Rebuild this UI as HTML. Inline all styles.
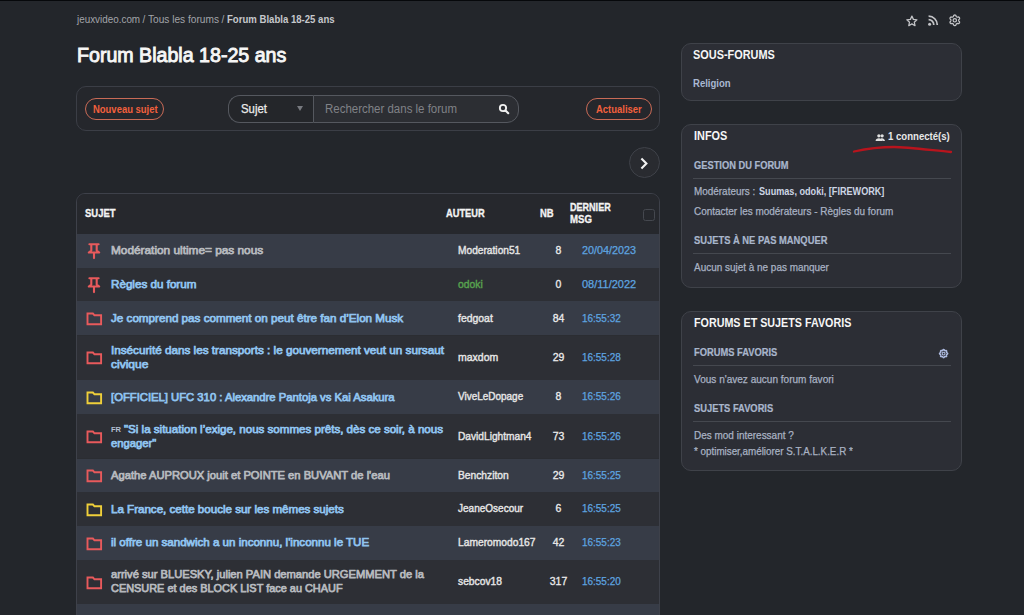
<!DOCTYPE html>
<html><head><meta charset="utf-8">
<style>
*{box-sizing:border-box;margin:0;padding:0}
html,body{width:1024px;height:615px;overflow:hidden;background:#23262b;font-family:"Liberation Sans",sans-serif;color:#e8e8e8}
.abs{position:absolute}
.t{position:absolute;white-space:nowrap;line-height:1}
#topline{left:0;top:0;width:1024px;height:1px;background:#06080b}
#toolbar{left:76px;top:86px;width:584px;height:45px;border:1px solid #3b3e46;border-radius:10px;background:#25272c}
.pill{position:absolute;height:22px;border:1.2px solid #c86a56;border-radius:11px}
#nouveau{left:84.5px;top:97.8px;width:79.5px}
#actualiser{left:586px;top:97.8px;width:65.8px}
#select{left:228px;top:95px;width:85px;height:28px;border:1px solid #55585f;border-right:none;border-radius:12px 0 0 12px;background:#24262a}
#select i{position:absolute;left:68px;top:10px;width:0;height:0;border-left:3.7px solid transparent;border-right:3.7px solid transparent;border-top:5.2px solid #77797f}
#search{left:312.5px;top:95px;width:206px;height:28px;border:1px solid #55585f;border-radius:0 12px 12px 0;background:#2c2e33}
#circle{left:629px;top:146.5px;width:31px;height:31px;border-radius:50%;border:1.3px solid #3f4249;background:#292b30}
#table{left:76px;top:193px;width:584px;height:440px;border:1px solid #3e414a;border-radius:9px;overflow:hidden;background:#2b2d32}
#thead{position:absolute;left:0;top:0;width:582px;height:40px;background:#26282d}
#chk{position:absolute;left:566px;top:15px;width:12px;height:12px;border:1.5px solid #45484f;border-radius:2.5px}
.row{position:absolute;left:0;width:582px}
.row.l{background:#373c47}
.row.d{background:#2d2f35}
.ic{position:absolute}
.card{position:absolute;left:681px;width:281px;border:1px solid #3f4249;border-radius:10px;background:#2c2e35}
.hr{position:absolute;left:693px;width:258px;height:1px;background:#45484f}
</style></head>
<body>
<div id="topline" class="abs"></div>


<div id="toolbar" class="abs"></div>
<div id="nouveau" class="pill"></div>
<div id="select" class="abs"><i></i></div>
<div id="search" class="abs"><svg style="position:absolute;left:184.5px;top:6.8px" width="12" height="12" viewBox="0 0 24 24"><circle cx="10" cy="10" r="6.3" fill="none" stroke="#f0f0f0" stroke-width="3.8"/><path d="M15 15l5.5 5.5" stroke="#f0f0f0" stroke-width="4.2" stroke-linecap="round"/></svg></div>
<div id="actualiser" class="pill"></div>

<div id="circle" class="abs"><svg style="position:absolute;left:9px;top:8px" width="12" height="14" viewBox="0 0 12 14"><path d="M2.4 2.6L7.4 7.6 2.4 12.6" fill="none" stroke="#f2f2f2" stroke-width="2.1"/></svg></div>

<div id="table" class="abs">
 <div id="thead"><div id="chk"></div></div>
<div class="row l" style="top:40.00px;height:33.70px"></div>
<div class="row d" style="top:73.70px;height:33.70px"></div>
<div class="row l" style="top:107.40px;height:34.10px"></div>
<div class="row d" style="top:141.50px;height:44.40px"></div>
<div class="row l" style="top:185.90px;height:34.30px"></div>
<div class="row d" style="top:220.20px;height:44.30px"></div>
<div class="row l" style="top:264.50px;height:33.50px"></div>
<div class="row d" style="top:298.00px;height:34.00px"></div>
<div class="row l" style="top:332.00px;height:33.70px"></div>
<div class="row d" style="top:365.70px;height:44.50px"></div>
<div class="row l" style="top:410.20px;height:40.00px"></div>
</div>

<div class="card" style="top:43px;height:58px"></div>
<div class="card" style="top:124px;height:164px"></div>
<div class="hr" style="top:178px"></div>
<div class="hr" style="top:253px"></div>
<svg class="abs" style="left:874.6px;top:133.6px" width="10.5" height="7" viewBox="0 0 22 15"><circle cx="8" cy="4" r="3.5" fill="#e0e0e0"/><circle cx="15" cy="4" r="3.5" fill="#e0e0e0"/><path d="M1 15c0-4 3-6 7-6s7 2 7 6zM12 9c4 0 9 1 9 6h-5" fill="#e0e0e0"/></svg>
<svg class="abs" style="left:850px;top:142px" width="105" height="14" viewBox="0 0 105 14"><path d="M4 9.5C20 6 32 5 44 5S80 8 101 10" fill="none" stroke="#b8141d" stroke-width="2.3" stroke-linecap="round"/></svg>

<div class="card" style="top:311px;height:160px"></div>

<div class="hr" style="top:365px"></div>
<div class="hr" style="top:421px"></div>

<svg class="ic" style="left:86.8px;top:242.95px" width="14" height="17" viewBox="0 0 14 17"><path d="M2.4 1.3h9.2M4.3 1.3v6.2L1.8 9.5h10.4L9.7 7.5V1.3M7 9.5v5.6" fill="none" stroke="#e85a5c" stroke-width="2.1" stroke-linejoin="round" stroke-linecap="round"/></svg>
<svg class="ic" style="left:86.8px;top:276.65px" width="14" height="17" viewBox="0 0 14 17"><path d="M2.4 1.3h9.2M4.3 1.3v6.2L1.8 9.5h10.4L9.7 7.5V1.3M7 9.5v5.6" fill="none" stroke="#e85a5c" stroke-width="2.1" stroke-linejoin="round" stroke-linecap="round"/></svg>
<svg class="ic" style="left:85.8px;top:312.15px" width="17" height="14" viewBox="0 0 17 14"><path d="M1.5 1.5h5.4l1.6 1.8h6.6v9H1.5z" fill="none" stroke="#e85a5c" stroke-width="1.9" stroke-linejoin="miter"/></svg>
<svg class="ic" style="left:85.8px;top:351.40px" width="17" height="14" viewBox="0 0 17 14"><path d="M1.5 1.5h5.4l1.6 1.8h6.6v9H1.5z" fill="none" stroke="#e85a5c" stroke-width="1.9" stroke-linejoin="miter"/></svg>
<svg class="ic" style="left:85.8px;top:390.75px" width="17" height="14" viewBox="0 0 17 14"><path d="M1.5 1.5h5.4l1.6 1.8h6.6v9H1.5z" fill="none" stroke="#efcf3a" stroke-width="1.9" stroke-linejoin="miter"/></svg>
<svg class="ic" style="left:85.8px;top:430.05px" width="17" height="14" viewBox="0 0 17 14"><path d="M1.5 1.5h5.4l1.6 1.8h6.6v9H1.5z" fill="none" stroke="#e85a5c" stroke-width="1.9" stroke-linejoin="miter"/></svg>
<svg class="ic" style="left:85.8px;top:468.95px" width="17" height="14" viewBox="0 0 17 14"><path d="M1.5 1.5h5.4l1.6 1.8h6.6v9H1.5z" fill="none" stroke="#e85a5c" stroke-width="1.9" stroke-linejoin="miter"/></svg>
<svg class="ic" style="left:85.8px;top:502.70px" width="17" height="14" viewBox="0 0 17 14"><path d="M1.5 1.5h5.4l1.6 1.8h6.6v9H1.5z" fill="none" stroke="#efcf3a" stroke-width="1.9" stroke-linejoin="miter"/></svg>
<svg class="ic" style="left:85.8px;top:536.55px" width="17" height="14" viewBox="0 0 17 14"><path d="M1.5 1.5h5.4l1.6 1.8h6.6v9H1.5z" fill="none" stroke="#e85a5c" stroke-width="1.9" stroke-linejoin="miter"/></svg>
<svg class="ic" style="left:85.8px;top:575.65px" width="17" height="14" viewBox="0 0 17 14"><path d="M1.5 1.5h5.4l1.6 1.8h6.6v9H1.5z" fill="none" stroke="#e85a5c" stroke-width="1.9" stroke-linejoin="miter"/></svg>
<div class="t" style="top:15.00px;font-size:10px;color:#a2a4a9;transform:scaleX(0.9871);transform-origin:0 0;left:76.50px;">jeuxvideo.com</div>
<div class="t" style="top:15.00px;font-size:10px;color:#a2a4a9;left:142.60px;">/</div>
<div class="t" style="top:15.00px;font-size:10px;color:#a2a4a9;transform:scaleX(1.0138);transform-origin:0 0;left:148.40px;">Tous les forums</div>
<div class="t" style="top:15.00px;font-size:10px;color:#a2a4a9;left:221.60px;">/</div>
<div class="t" style="top:15.00px;font-size:10px;font-weight:700;color:#c6c8cc;transform:scaleX(0.9584);transform-origin:0 0;left:226.60px;">Forum Blabla 18-25 ans</div>
<div class="t" style="top:44.60px;font-size:20px;color:#f6f6f6;transform:scaleX(0.9805);transform-origin:0 0;-webkit-text-stroke:0.9px #f6f6f6;left:76.50px;">Forum Blabla 18-25 ans</div>
<div class="t" style="top:104.80px;font-size:10px;font-weight:700;color:#f2603d;transform:scaleX(0.945);transform-origin:0 0;left:92.50px;">Nouveau sujet</div>
<div class="t" style="top:103.20px;font-size:12px;color:#ececec;transform:scaleX(0.9467);transform-origin:0 0;-webkit-text-stroke:0.25px #ececec;left:241.30px;">Sujet</div>
<div class="t" style="top:103.20px;font-size:12px;color:#808287;transform:scaleX(0.956);transform-origin:0 0;left:325.00px;">Rechercher dans le forum</div>
<div class="t" style="top:104.75px;font-size:10px;font-weight:700;color:#f2603d;transform:scaleX(0.9471);transform-origin:0 0;left:596.00px;">Actualiser</div>
<div class="t" style="top:209.10px;font-size:10px;font-weight:700;color:#f4f4f4;transform:scaleX(0.9462);transform-origin:0 0;-webkit-text-stroke:0.3px #f4f4f4;left:84.70px;">SUJET</div>
<div class="t" style="top:209.00px;font-size:10px;font-weight:700;color:#f4f4f4;transform:scaleX(0.9287);transform-origin:0 0;-webkit-text-stroke:0.3px #f4f4f4;left:446.15px;">AUTEUR</div>
<div class="t" style="top:208.90px;font-size:10px;font-weight:700;color:#f4f4f4;transform:scaleX(0.9444);transform-origin:0 0;-webkit-text-stroke:0.3px #f4f4f4;left:539.90px;">NB</div>
<div class="t" style="top:202.90px;font-size:10px;font-weight:700;color:#f4f4f4;transform:scaleX(0.9041);transform-origin:0 0;-webkit-text-stroke:0.3px #f4f4f4;left:569.90px;">DERNIER</div>
<div class="t" style="top:215.00px;font-size:10px;font-weight:700;color:#f4f4f4;transform:scaleX(0.9613);transform-origin:0 0;-webkit-text-stroke:0.3px #f4f4f4;left:569.90px;">MSG</div>
<div class="t" style="top:245.35px;font-size:11.5px;color:#b7babf;transform:scaleX(1.0284);transform-origin:0 0;-webkit-text-stroke:0.75px #b7babf;left:111.00px;">Modération ultime= pas nous</div>
<div class="t" style="top:245.25px;font-size:11px;color:#e6e6e6;transform:scaleX(0.926);transform-origin:0 0;-webkit-text-stroke:0.4px #e6e6e6;left:458.00px;">Moderation51</div>
<div class="t" style="top:245.25px;font-size:10.5px;color:#ececec;-webkit-text-stroke:0.3px #ececec;left:538px;width:41px;text-align:center;">8</div>
<div class="t" style="top:245.25px;font-size:10.5px;color:#5ea5e0;transform:scaleX(1.0293);transform-origin:0 0;-webkit-text-stroke:0.25px #5ea5e0;left:582.00px;">20/04/2023</div>
<div class="t" style="top:279.05px;font-size:11.5px;color:#90c4f0;transform:scaleX(1.0121);transform-origin:0 0;-webkit-text-stroke:0.75px #90c4f0;left:111.00px;">Règles du forum</div>
<div class="t" style="top:278.95px;font-size:11px;color:#58a34f;transform:scaleX(0.9431);transform-origin:0 0;-webkit-text-stroke:0.4px #58a34f;left:458.00px;">odoki</div>
<div class="t" style="top:278.95px;font-size:10.5px;color:#ececec;-webkit-text-stroke:0.3px #ececec;left:538px;width:41px;text-align:center;">0</div>
<div class="t" style="top:278.95px;font-size:10.5px;color:#5ea5e0;transform:scaleX(1.0448);transform-origin:0 0;-webkit-text-stroke:0.25px #5ea5e0;left:582.00px;">08/11/2022</div>
<div class="t" style="top:312.95px;font-size:11.5px;color:#90c4f0;transform:scaleX(1.0135);transform-origin:0 0;-webkit-text-stroke:0.75px #90c4f0;left:111.00px;">Je comprend pas comment on peut être fan d’Elon Musk</div>
<div class="t" style="top:312.85px;font-size:11px;color:#e6e6e6;transform:scaleX(0.9481);transform-origin:0 0;-webkit-text-stroke:0.4px #e6e6e6;left:458.00px;">fedgoat</div>
<div class="t" style="top:312.85px;font-size:10.5px;color:#ececec;-webkit-text-stroke:0.3px #ececec;left:538px;width:41px;text-align:center;">84</div>
<div class="t" style="top:312.85px;font-size:10.5px;color:#5ea5e0;transform:scaleX(0.9468);transform-origin:0 0;-webkit-text-stroke:0.25px #5ea5e0;left:582.00px;">16:55:32</div>
<div class="t" style="top:344.90px;font-size:11.5px;color:#90c4f0;transform:scaleX(1.0174);transform-origin:0 0;-webkit-text-stroke:0.75px #90c4f0;left:111.00px;">Insécurité dans les transports : le gouvernement veut un sursaut</div>
<div class="t" style="top:359.10px;font-size:11.5px;color:#90c4f0;transform:scaleX(1.0443);transform-origin:0 0;-webkit-text-stroke:0.75px #90c4f0;left:111.00px;">civique</div>
<div class="t" style="top:352.10px;font-size:11px;color:#e6e6e6;transform:scaleX(0.9553);transform-origin:0 0;-webkit-text-stroke:0.4px #e6e6e6;left:458.00px;">maxdom</div>
<div class="t" style="top:352.10px;font-size:10.5px;color:#ececec;-webkit-text-stroke:0.3px #ececec;left:538px;width:41px;text-align:center;">29</div>
<div class="t" style="top:352.10px;font-size:10.5px;color:#5ea5e0;transform:scaleX(0.9468);transform-origin:0 0;-webkit-text-stroke:0.25px #5ea5e0;left:582.00px;">16:55:28</div>
<div class="t" style="top:391.55px;font-size:11.5px;color:#90c4f0;transform:scaleX(0.9794);transform-origin:0 0;-webkit-text-stroke:0.75px #90c4f0;left:111.00px;">[OFFICIEL] UFC 310 : Alexandre Pantoja vs Kai Asakura</div>
<div class="t" style="top:391.45px;font-size:11px;color:#e6e6e6;transform:scaleX(0.9059);transform-origin:0 0;-webkit-text-stroke:0.4px #e6e6e6;left:458.00px;">ViveLeDopage</div>
<div class="t" style="top:391.45px;font-size:10.5px;color:#ececec;-webkit-text-stroke:0.3px #ececec;left:538px;width:41px;text-align:center;">8</div>
<div class="t" style="top:391.45px;font-size:10.5px;color:#5ea5e0;transform:scaleX(0.9468);transform-origin:0 0;-webkit-text-stroke:0.25px #5ea5e0;left:582.00px;">16:55:26</div>
<div class="t" style="top:425.95px;font-size:8px;font-weight:700;color:#b3bfd2;transform:scaleX(0.9464);transform-origin:0 0;left:111.20px;">FR</div>
<div class="t" style="top:423.55px;font-size:11.5px;color:#90c4f0;transform:scaleX(1.0054);transform-origin:0 0;-webkit-text-stroke:0.75px #90c4f0;left:123.70px;">"Si la situation l’exige, nous sommes prêts, dès ce soir, à nous</div>
<div class="t" style="top:437.75px;font-size:11.5px;color:#90c4f0;transform:scaleX(0.9785);transform-origin:0 0;-webkit-text-stroke:0.75px #90c4f0;left:111.00px;">engager"</div>
<div class="t" style="top:430.75px;font-size:11px;color:#e6e6e6;transform:scaleX(0.9245);transform-origin:0 0;-webkit-text-stroke:0.4px #e6e6e6;left:458.00px;">DavidLightman4</div>
<div class="t" style="top:430.75px;font-size:10.5px;color:#ececec;-webkit-text-stroke:0.3px #ececec;left:538px;width:41px;text-align:center;">73</div>
<div class="t" style="top:430.75px;font-size:10.5px;color:#5ea5e0;transform:scaleX(0.9468);transform-origin:0 0;-webkit-text-stroke:0.25px #5ea5e0;left:582.00px;">16:55:26</div>
<div class="t" style="top:469.75px;font-size:11.5px;color:#b7babf;transform:scaleX(0.9723);transform-origin:0 0;-webkit-text-stroke:0.75px #b7babf;left:111.00px;">Agathe AUPROUX jouit et POINTE en BUVANT de l'eau</div>
<div class="t" style="top:469.65px;font-size:11px;color:#e6e6e6;transform:scaleX(0.9313);transform-origin:0 0;-webkit-text-stroke:0.4px #e6e6e6;left:458.00px;">Benchziton</div>
<div class="t" style="top:469.65px;font-size:10.5px;color:#ececec;-webkit-text-stroke:0.3px #ececec;left:538px;width:41px;text-align:center;">29</div>
<div class="t" style="top:469.65px;font-size:10.5px;color:#5ea5e0;transform:scaleX(0.9468);transform-origin:0 0;-webkit-text-stroke:0.25px #5ea5e0;left:582.00px;">16:55:25</div>
<div class="t" style="top:503.50px;font-size:11.5px;color:#90c4f0;transform:scaleX(1.0061);transform-origin:0 0;-webkit-text-stroke:0.75px #90c4f0;left:111.00px;">La France, cette boucle sur les mêmes sujets</div>
<div class="t" style="top:503.40px;font-size:11px;color:#e6e6e6;transform:scaleX(0.9113);transform-origin:0 0;-webkit-text-stroke:0.4px #e6e6e6;left:458.00px;">JeaneOsecour</div>
<div class="t" style="top:503.40px;font-size:10.5px;color:#ececec;-webkit-text-stroke:0.3px #ececec;left:538px;width:41px;text-align:center;">6</div>
<div class="t" style="top:503.40px;font-size:10.5px;color:#5ea5e0;transform:scaleX(0.9468);transform-origin:0 0;-webkit-text-stroke:0.25px #5ea5e0;left:582.00px;">16:55:25</div>
<div class="t" style="top:537.35px;font-size:11.5px;color:#90c4f0;transform:scaleX(1.0052);transform-origin:0 0;-webkit-text-stroke:0.75px #90c4f0;left:111.00px;">il offre un sandwich a un inconnu, l'inconnu le TUE</div>
<div class="t" style="top:537.25px;font-size:11px;color:#e6e6e6;transform:scaleX(0.9318);transform-origin:0 0;-webkit-text-stroke:0.4px #e6e6e6;left:458.00px;">Lameromodo167</div>
<div class="t" style="top:537.25px;font-size:10.5px;color:#ececec;-webkit-text-stroke:0.3px #ececec;left:538px;width:41px;text-align:center;">42</div>
<div class="t" style="top:537.25px;font-size:10.5px;color:#5ea5e0;transform:scaleX(0.9468);transform-origin:0 0;-webkit-text-stroke:0.25px #5ea5e0;left:582.00px;">16:55:23</div>
<div class="t" style="top:569.15px;font-size:11.5px;color:#b7babf;transform:scaleX(0.9694);transform-origin:0 0;-webkit-text-stroke:0.75px #b7babf;left:111.00px;">arrivé sur BLUESKY, julien PAIN demande URGEMMENT de la</div>
<div class="t" style="top:583.35px;font-size:11.5px;color:#b7babf;transform:scaleX(0.9494);transform-origin:0 0;-webkit-text-stroke:0.75px #b7babf;left:111.00px;">CENSURE et des BLOCK LIST face au CHAUF</div>
<div class="t" style="top:576.35px;font-size:11px;color:#e6e6e6;transform:scaleX(0.9343);transform-origin:0 0;-webkit-text-stroke:0.4px #e6e6e6;left:458.00px;">sebcov18</div>
<div class="t" style="top:576.35px;font-size:10.5px;color:#ececec;-webkit-text-stroke:0.3px #ececec;left:538px;width:41px;text-align:center;">317</div>
<div class="t" style="top:576.35px;font-size:10.5px;color:#5ea5e0;transform:scaleX(0.9468);transform-origin:0 0;-webkit-text-stroke:0.25px #5ea5e0;left:582.00px;">16:55:20</div>
<div class="t" style="top:49.40px;font-size:12px;font-weight:700;color:#f6f6f6;transform:scaleX(0.9089);transform-origin:0 0;left:693.30px;">SOUS-FORUMS</div>
<div class="t" style="top:78.40px;font-size:10.5px;font-weight:700;color:#a9b8d2;transform:scaleX(0.9101);transform-origin:0 0;left:693.30px;">Religion</div>
<div class="t" style="top:130.30px;font-size:12px;font-weight:700;color:#f6f6f6;transform:scaleX(0.9081);transform-origin:0 0;left:693.70px;">INFOS</div>
<div class="t" style="top:131.80px;font-size:10px;font-weight:700;color:#e8e8e8;transform:scaleX(0.9586);transform-origin:0 0;left:888.30px;">1 connecté(s)</div>
<div class="t" style="top:161.20px;font-size:10px;font-weight:700;color:#a9b6cc;transform:scaleX(0.9304);transform-origin:0 0;-webkit-text-stroke:0.2px #a9b6cc;left:693.70px;">GESTION DU FORUM</div>
<div class="t" style="top:186.30px;font-size:10.5px;color:#a9b2c3;transform:scaleX(0.9447);transform-origin:0 0;-webkit-text-stroke:0.25px #a9b2c3;left:693.50px;">Modérateurs :</div>
<div class="t" style="top:186.30px;font-size:10.5px;font-weight:700;color:#cdd5e4;transform:scaleX(0.8668);transform-origin:0 0;left:758.70px;">Suumas, odoki, [FIREWORK]</div>
<div class="t" style="top:206.30px;font-size:10.5px;color:#a9b2c3;transform:scaleX(0.9486);transform-origin:0 0;-webkit-text-stroke:0.25px #a9b2c3;left:693.50px;">Contacter les modérateurs - Règles du forum</div>
<div class="t" style="top:236.00px;font-size:10px;font-weight:700;color:#a9b6cc;transform:scaleX(0.9353);transform-origin:0 0;-webkit-text-stroke:0.2px #a9b6cc;left:693.50px;">SUJETS À NE PAS MANQUER</div>
<div class="t" style="top:262.20px;font-size:10.5px;color:#a9b2c3;transform:scaleX(0.9471);transform-origin:0 0;-webkit-text-stroke:0.25px #a9b2c3;left:693.50px;">Aucun sujet à ne pas manquer</div>
<div class="t" style="top:317.00px;font-size:12px;font-weight:700;color:#f6f6f6;transform:scaleX(0.8947);transform-origin:0 0;left:693.60px;">FORUMS ET SUJETS FAVORIS</div>
<div class="t" style="top:347.80px;font-size:10px;font-weight:700;color:#a9b6cc;transform:scaleX(0.932);transform-origin:0 0;-webkit-text-stroke:0.2px #a9b6cc;left:693.60px;">FORUMS FAVORIS</div>
<div class="t" style="top:373.80px;font-size:10.5px;color:#a9b2c3;transform:scaleX(0.9564);transform-origin:0 0;-webkit-text-stroke:0.25px #a9b2c3;left:693.60px;">Vous n'avez aucun forum favori</div>
<div class="t" style="top:404.20px;font-size:10px;font-weight:700;color:#a9b6cc;transform:scaleX(0.9335);transform-origin:0 0;-webkit-text-stroke:0.2px #a9b6cc;left:693.60px;">SUJETS FAVORIS</div>
<div class="t" style="top:430.00px;font-size:10.5px;color:#a9b2c3;transform:scaleX(0.9499);transform-origin:0 0;-webkit-text-stroke:0.25px #a9b2c3;left:693.60px;">Des mod interessant ?</div>
<div class="t" style="top:445.60px;font-size:10.5px;color:#a9b2c3;transform:scaleX(0.9351);transform-origin:0 0;-webkit-text-stroke:0.25px #a9b2c3;left:693.60px;">* optimiser,améliorer S.T.A.L.K.E.R *</div>
<svg class="abs" style="left:0;top:0;position:absolute" width="1024" height="615" viewBox="0 0 1024 615"><path d="M911.90 16.10 L913.37 19.38 L916.94 19.76 L914.28 22.17 L915.02 25.69 L911.90 23.90 L908.78 25.69 L909.52 22.17 L906.86 19.76 L910.43 19.38Z" fill="none" stroke="#c4c5c8" stroke-width="1.25" stroke-linejoin="round"/><circle cx="929.6" cy="24.3" r="1.5" fill="#c4c5c8"/><path d="M928.6 19.7 A5.2 5.2 0 0 1 933.8 24.9 M928.6 16.2 A8.7 8.7 0 0 1 937.3 24.9" fill="none" stroke="#c4c5c8" stroke-width="1.7"/><path d="M954.80 15.00 L955.08 15.03 L955.35 15.11 L955.60 15.25 L955.83 15.46 L955.99 15.86 L956.11 16.25 L956.27 16.48 L956.42 16.66 L956.58 16.81 L956.75 16.92 L956.94 17.01 L957.14 17.08 L957.37 17.12 L957.65 17.14 L958.05 17.05 L958.48 16.99 L958.77 17.08 L959.02 17.23 L959.23 17.42 L959.39 17.65 L959.50 17.90 L959.57 18.18 L959.57 18.47 L959.50 18.77 L959.24 19.11 L958.96 19.42 L958.84 19.66 L958.76 19.88 L958.72 20.09 L958.70 20.30 L958.72 20.51 L958.76 20.72 L958.84 20.94 L958.96 21.18 L959.24 21.49 L959.50 21.83 L959.57 22.13 L959.57 22.42 L959.50 22.70 L959.39 22.95 L959.23 23.18 L959.02 23.37 L958.77 23.52 L958.48 23.61 L958.05 23.55 L957.65 23.46 L957.37 23.48 L957.14 23.52 L956.94 23.59 L956.75 23.68 L956.58 23.79 L956.42 23.94 L956.27 24.12 L956.11 24.35 L955.99 24.74 L955.83 25.14 L955.60 25.35 L955.35 25.49 L955.08 25.57 L954.80 25.60 L954.52 25.57 L954.25 25.49 L954.00 25.35 L953.77 25.14 L953.61 24.74 L953.49 24.35 L953.33 24.12 L953.18 23.94 L953.02 23.79 L952.85 23.68 L952.66 23.59 L952.46 23.52 L952.23 23.48 L951.95 23.46 L951.55 23.55 L951.12 23.61 L950.83 23.52 L950.58 23.37 L950.37 23.18 L950.21 22.95 L950.10 22.70 L950.03 22.42 L950.03 22.13 L950.10 21.83 L950.36 21.49 L950.64 21.18 L950.76 20.94 L950.84 20.72 L950.88 20.51 L950.90 20.30 L950.88 20.09 L950.84 19.88 L950.76 19.66 L950.64 19.42 L950.36 19.11 L950.10 18.77 L950.03 18.47 L950.03 18.18 L950.10 17.90 L950.21 17.65 L950.37 17.42 L950.58 17.23 L950.83 17.08 L951.12 16.99 L951.55 17.05 L951.95 17.14 L952.23 17.12 L952.46 17.08 L952.66 17.01 L952.85 16.92 L953.02 16.81 L953.18 16.66 L953.33 16.48 L953.49 16.25 L953.61 15.86 L953.77 15.46 L954.00 15.25 L954.25 15.11 L954.52 15.03Z" fill="none" stroke="#c4c5c8" stroke-width="1.3" stroke-linejoin="round"/><circle cx="954.8" cy="20.3" r="1.7" fill="none" stroke="#c4c5c8" stroke-width="1.2"/><path d="M943.60 349.50 L943.81 349.53 L944.02 349.63 L944.20 349.80 L944.32 350.20 L944.45 350.44 L944.58 350.59 L944.71 350.70 L944.86 350.76 L945.03 350.78 L945.24 350.77 L945.49 350.69 L945.86 350.49 L946.11 350.50 L946.33 350.57 L946.50 350.70 L946.63 350.87 L946.70 351.09 L946.71 351.34 L946.51 351.71 L946.43 351.96 L946.42 352.17 L946.44 352.34 L946.50 352.49 L946.61 352.62 L946.76 352.75 L947.00 352.88 L947.40 353.00 L947.57 353.18 L947.67 353.39 L947.70 353.60 L947.67 353.81 L947.57 354.02 L947.40 354.20 L947.00 354.32 L946.76 354.45 L946.61 354.58 L946.50 354.71 L946.44 354.86 L946.42 355.03 L946.43 355.24 L946.51 355.49 L946.71 355.86 L946.70 356.11 L946.63 356.33 L946.50 356.50 L946.33 356.63 L946.11 356.70 L945.86 356.71 L945.49 356.51 L945.24 356.43 L945.03 356.42 L944.86 356.44 L944.71 356.50 L944.58 356.61 L944.45 356.76 L944.32 357.00 L944.20 357.40 L944.02 357.57 L943.81 357.67 L943.60 357.70 L943.39 357.67 L943.18 357.57 L943.00 357.40 L942.88 357.00 L942.75 356.76 L942.62 356.61 L942.49 356.50 L942.34 356.44 L942.17 356.42 L941.96 356.43 L941.71 356.51 L941.34 356.71 L941.09 356.70 L940.87 356.63 L940.70 356.50 L940.57 356.33 L940.50 356.11 L940.49 355.86 L940.69 355.49 L940.77 355.24 L940.78 355.03 L940.76 354.86 L940.70 354.71 L940.59 354.58 L940.44 354.45 L940.20 354.32 L939.80 354.20 L939.63 354.02 L939.53 353.81 L939.50 353.60 L939.53 353.39 L939.63 353.18 L939.80 353.00 L940.20 352.88 L940.44 352.75 L940.59 352.62 L940.70 352.49 L940.76 352.34 L940.78 352.17 L940.77 351.96 L940.69 351.71 L940.49 351.34 L940.50 351.09 L940.57 350.87 L940.70 350.70 L940.87 350.57 L941.09 350.50 L941.34 350.49 L941.71 350.69 L941.96 350.77 L942.17 350.78 L942.34 350.76 L942.49 350.70 L942.62 350.59 L942.75 350.44 L942.88 350.20 L943.00 349.80 L943.18 349.63 L943.39 349.53Z" fill="none" stroke="#aebbe0" stroke-width="1.4" stroke-linejoin="round"/><circle cx="943.6" cy="353.6" r="1.4" fill="none" stroke="#aebbe0" stroke-width="1.1"/></svg>
</body></html>
